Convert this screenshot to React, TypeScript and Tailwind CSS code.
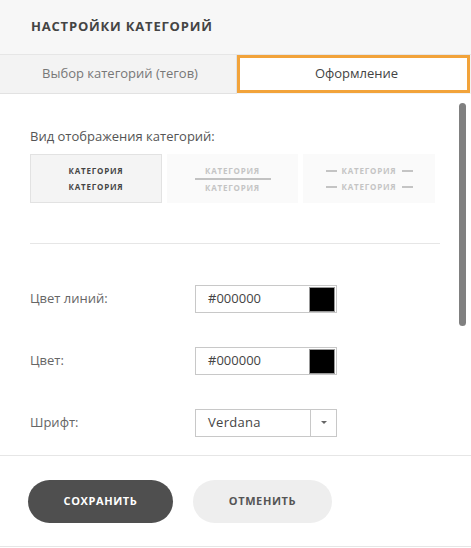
import React from "react";

function ColorRow({ label }: { label: string }) {
  return (
    <div className="flex items-center h-[28px]">
      <div className="w-[165px] text-[13px] text-[#666]">{label}</div>
      <div className="flex items-center w-[142px] h-[28px] border border-[#c8c8c8] bg-white">
        <div className="flex-1 pl-[12px] text-[13px] text-[#444]">#000000</div>
        <div className="w-[26px] h-[25px] mr-[1px] bg-black border border-[#999]" />
      </div>
    </div>
  );
}

export default function App() {
  const font = { fontFamily: '"Open Sans", "Noto Sans", sans-serif' };
  return (
    <div className="w-[471px] h-[548px] bg-white flex flex-col overflow-hidden" style={font}>
      <div className="h-[54px] bg-[#f7f7f7] flex items-center pl-[31px]">
        <div className="text-[13px] font-bold tracking-[0.8px] text-[#444] uppercase">Настройки категорий</div>
      </div>
      <div className="h-[40px] flex border-t border-[#e6e6e6] bg-[#f3f3f3]">
        <div className="w-[237px] flex items-center justify-center text-[13px] text-[#777] border-r border-[#e2e2e2] border-b pl-[4px]">
          Выбор категорий (тегов)
        </div>
        <div className="flex-1 mr-[1px] mb-[1px] bg-white border-[3px] border-[#f2a33a] flex items-center justify-center text-[13px] text-[#444] pl-[6px]">
          Оформление
        </div>
      </div>
      <div className="relative flex-1 flex flex-col px-[30px]">
        <div className="absolute right-[5px] top-[9px] w-[7px] h-[223px] rounded-full bg-[#808080]" />
        <div className="mt-[33px] text-[13px] text-[#555] leading-[18px]">
          Вид отображения категорий:
        </div>
        <div className="flex gap-[5px] mt-[9px] w-[405px]">
          <div className="w-[132px] h-[49px] bg-[#f4f4f4] border border-[#e2e2e2] flex flex-col items-center justify-center gap-[5px] text-[8px] font-bold tracking-[0.8px] text-[#444]">
            <div className="leading-[11px]">КАТЕГОРИЯ</div>
            <div className="leading-[11px]">КАТЕГОРИЯ</div>
          </div>
          <div className="w-[131px] h-[49px] bg-[#fafafa] flex flex-col items-center justify-center text-[8px] font-bold tracking-[0.8px] text-[#c4c4c4]">
            <div className="leading-[11px]">КАТЕГОРИЯ</div>
            <div className="w-[76px] h-[2px] bg-[#c2c2c2] my-[2px]" />
            <div className="leading-[11px]">КАТЕГОРИЯ</div>
          </div>
          <div className="w-[132px] h-[49px] bg-[#fafafa] flex flex-col items-center justify-center gap-[5px] text-[8px] font-bold tracking-[0.8px] text-[#c4c4c4]">
            <div className="flex items-center gap-[5px] leading-[11px]">
              <span className="w-[11px] h-[2px] bg-[#c4c4c4]" />КАТЕГОРИЯ<span className="w-[11px] h-[2px] bg-[#c4c4c4]" />
            </div>
            <div className="flex items-center gap-[5px] leading-[11px]">
              <span className="w-[11px] h-[2px] bg-[#c4c4c4]" />КАТЕГОРИЯ<span className="w-[11px] h-[2px] bg-[#c4c4c4]" />
            </div>
          </div>
        </div>
        <div className="mt-[40px] h-[1px] w-[410px] bg-[#e6e6e6]" />
        <div className="mt-[41px]">
          <ColorRow label="Цвет линий:" />
        </div>
        <div className="mt-[34px]">
          <ColorRow label="Цвет:" />
        </div>
        <div className="mt-[34px] flex items-center h-[28px]">
          <div className="w-[165px] text-[13px] text-[#666]">Шрифт:</div>
          <div className="flex items-center w-[142px] h-[28px] border border-[#c8c8c8] bg-white">
            <div className="flex-1 pl-[12px] text-[13px] text-[#444] tracking-[0.3px]">Verdana</div>
            <div className="w-[26px] h-full border-l border-[#c8c8c8] flex items-center justify-center">
              <svg width="6" height="4" viewBox="0 0 6 4"><path d="M0 0 L6 0 L3 3 Z" fill="#666" /></svg>
            </div>
          </div>
        </div>
      </div>
      <div className="h-[92px] border-t border-b border-[#e6e6e6] flex items-center gap-[20px] pl-[28px] mb-[1px]">
        <button className="w-[145px] h-[43px] rounded-full bg-[#4f4f4f] text-white text-[11px] font-bold tracking-[0.6px]">
          СОХРАНИТЬ
        </button>
        <button className="w-[139px] h-[43px] rounded-full bg-[#eeeeee] text-[#555] text-[11px] font-bold tracking-[0.6px]">
          ОТМЕНИТЬ
        </button>
      </div>
    </div>
  );
}
